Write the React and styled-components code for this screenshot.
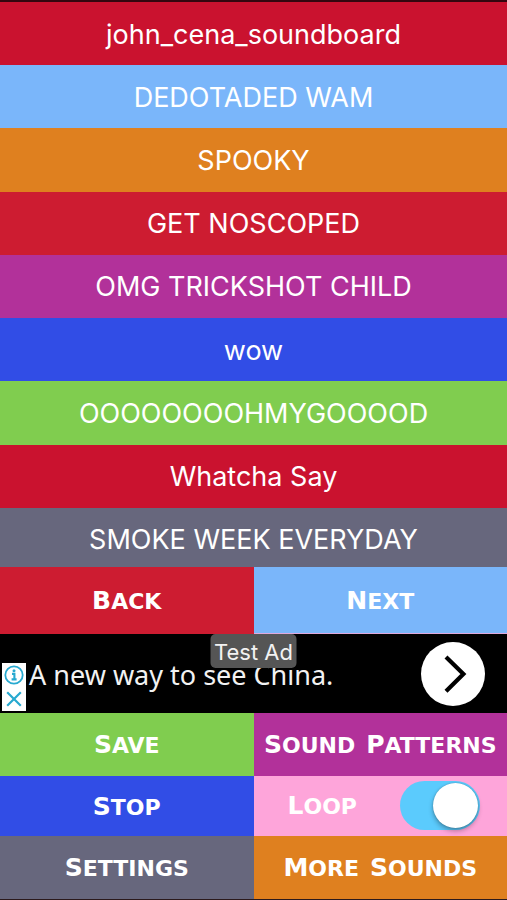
import React, { useState } from "react";
import styled, { createGlobalStyle } from "styled-components";

const GlobalStyle = createGlobalStyle`
  * { box-sizing: border-box; }
  body { margin: 0; background: #000; }
  button, input { margin: 0; font: inherit; }
`;

const colors = {
  crimson: "#ca122f",
  red: "#cd1c31",
  sky: "#7ab6fa",
  orange: "#df801f",
  purple: "#b2319a",
  blue: "#314de6",
  green: "#80cd4f",
  slate: "#67677d",
  pink: "#fea5da",
};

const Page = styled.main`
  display: flex;
  flex-direction: column;
  min-height: 100vh;
  border-top: 2px solid #35060f;
  border-bottom: 1px solid #2b1a1c;
  font-family: Inter, "Liberation Sans", sans-serif;
  color: #fff;
`;

const SoundViewport = styled.section`
  flex: 1;
  display: flex;
  flex-direction: column;
  overflow: hidden;
`;

const SoundList = styled.div`
  flex: 1;
  display: grid;
  grid-auto-rows: minmax(48px, 1fr);
  margin-bottom: -4px;
`;

const SoundButton = styled.button`
  border: 0;
  padding: 2px 12px 0;
  background: ${(p) => colors[p.$tone]};
  color: #fff;
  font-family: Inter, Roboto, sans-serif;
  font-size: 27px;
  font-weight: 400;
  line-height: 36px;
  text-align: center;
  cursor: pointer;
`;

const Controls = styled.div`
  display: grid;
  grid-template-columns: 1fr 1fr;
  grid-template-rows: ${(p) => p.$rows};
`;

const ControlButton = styled.button`
  display: flex;
  align-items: center;
  justify-content: center;
  gap: 11px;
  border: 0;
  padding: 0 4px;
  background: ${(p) => colors[p.$tone]};
  color: #fff;
`;

const NextButton = styled(ControlButton)`
  border-bottom: 1px solid #e0a9dc;
`;

const Word = styled.span`
  display: block;
  padding-top: 2px;
  font-family: "DejaVu Sans", sans-serif;
  font-size: 22px;
  font-weight: 700;
  line-height: 28px;
  text-transform: uppercase;

  &::first-letter {
    font-size: 25px;
  }
`;

const AdBanner = styled.section`
  position: relative;
  display: flex;
  align-items: center;
  height: 79px;
  padding: 0 22px 0 2px;
  background: #000;
`;

const AdTools = styled.div`
  display: grid;
  grid-template-rows: 1fr 1fr;
  align-self: flex-end;
  width: 24px;
  height: 48px;
  margin-bottom: 2px;
  background: #fff;
`;

const AdTool = styled.button`
  display: grid;
  place-items: center;
  border: 0;
  padding: 0;
  background: transparent;
`;

const AdText = styled.p`
  flex: 1;
  margin: 0;
  padding: 2px 0 0 3px;
  font-family: "Noto Sans", "Open Sans", sans-serif;
  font-size: 27px;
  font-weight: 400;
  line-height: 36px;
  color: #f2f2f2;
  white-space: nowrap;
`;

const AdBadge = styled.span`
  position: absolute;
  top: 0;
  left: 50%;
  transform: translateX(-50%);
  padding: 3px 4px 1px;
  border-radius: 5px;
  background: #555;
  color: #f2f2f2;
  font-family: Inter, Roboto, sans-serif;
  font-size: 22px;
  line-height: 30px;
  white-space: nowrap;
`;

const AdOpen = styled.button`
  display: grid;
  place-items: center;
  width: 64px;
  height: 64px;
  border: 0;
  border-radius: 50%;
  padding: 0;
  background: #fff;
`;

const LoopControl = styled.label`
  display: flex;
  align-items: center;
  justify-content: space-between;
  padding: 0 27px 2px 34px;
  background: ${colors.pink};
`;

const Switch = styled.input`
  appearance: none;
  display: flex;
  align-items: center;
  width: 80px;
  height: 49px;
  padding: 0 2px;
  border-radius: 25px;
  background: ${(p) => (p.checked ? "#5bcbfd" : "#e5e5e5")};
  cursor: pointer;

  &::before {
    content: "";
    width: 45px;
    height: 45px;
    margin-left: ${(p) => (p.checked ? "auto" : "0")};
    border-radius: 50%;
    background: #fff;
    box-shadow: 0 3px 5px rgba(0, 0, 0, 0.3), 0 0 2px rgba(0, 0, 0, 0.25);
  }
`;

const sounds = [
  ["john_cena_soundboard", "crimson"],
  ["DEDOTADED WAM", "sky"],
  ["SPOOKY", "orange"],
  ["GET NOSCOPED", "red"],
  ["OMG TRICKSHOT CHILD", "purple"],
  ["wow", "blue"],
  ["OOOOOOOOHMYGOOOOD", "green"],
  ["Whatcha Say", "crimson"],
  ["SMOKE WEEK EVERYDAY", "slate"],
];

function Caps({ children }) {
  return children.split(" ").map((word) => <Word key={word}>{word}</Word>);
}

export default function App() {
  const [loop, setLoop] = useState(true);
  return (
    <>
      <GlobalStyle />
      <Page>
        <SoundViewport>
          <SoundList>
            {sounds.map(([name, tone]) => (
              <SoundButton key={name} $tone={tone}>{name}</SoundButton>
            ))}
          </SoundList>
        </SoundViewport>

        <Controls $rows="67px">
          <ControlButton $tone="red"><Caps>Back</Caps></ControlButton>
          <NextButton $tone="sky"><Caps>Next</Caps></NextButton>
        </Controls>

        <AdBanner>
          <AdTools>
            <AdTool aria-label="Ad information">
              <svg width="20" height="20" viewBox="0 0 20 20" fill="none" stroke="#27a9d0">
                <circle cx="10" cy="10" r="8.7" strokeWidth="1.8" />
                <circle cx="10" cy="5.8" r="1.5" fill="#27a9d0" stroke="none" />
                <path d="M8 8.9h2.4v5.4M7.6 14.4h5" strokeWidth="2.1" />
              </svg>
            </AdTool>
            <AdTool aria-label="Close ad">
              <svg width="18" height="18" viewBox="0 0 18 18" fill="none" stroke="#27a9d0" strokeWidth="2.2">
                <path d="M2.2 2.2l13.6 13.6M15.8 2.2L2.2 15.8" />
              </svg>
            </AdTool>
          </AdTools>
          <AdText>A new way to see China.</AdText>
          <AdOpen aria-label="Open ad">
            <svg width="64" height="64" viewBox="0 0 64 64" fill="none" stroke="#000" strokeWidth="4.2">
              <path d="M25 15l17.4 17L25 49.2" />
            </svg>
          </AdOpen>
          <AdBadge>Test Ad</AdBadge>
        </AdBanner>

        <Controls $rows="63px 60px 63px">
          <ControlButton $tone="green"><Caps>Save</Caps></ControlButton>
          <ControlButton $tone="purple"><Caps>Sound Patterns</Caps></ControlButton>
          <ControlButton $tone="blue"><Caps>Stop</Caps></ControlButton>
          <LoopControl>
            <Caps>Loop</Caps>
            <Switch
              type="checkbox"
              role="switch"
              checked={loop}
              onChange={(e) => setLoop(e.target.checked)}
            />
          </LoopControl>
          <ControlButton $tone="slate"><Caps>Settings</Caps></ControlButton>
          <ControlButton $tone="orange"><Caps>More Sounds</Caps></ControlButton>
        </Controls>
      </Page>
    </>
  );
}
